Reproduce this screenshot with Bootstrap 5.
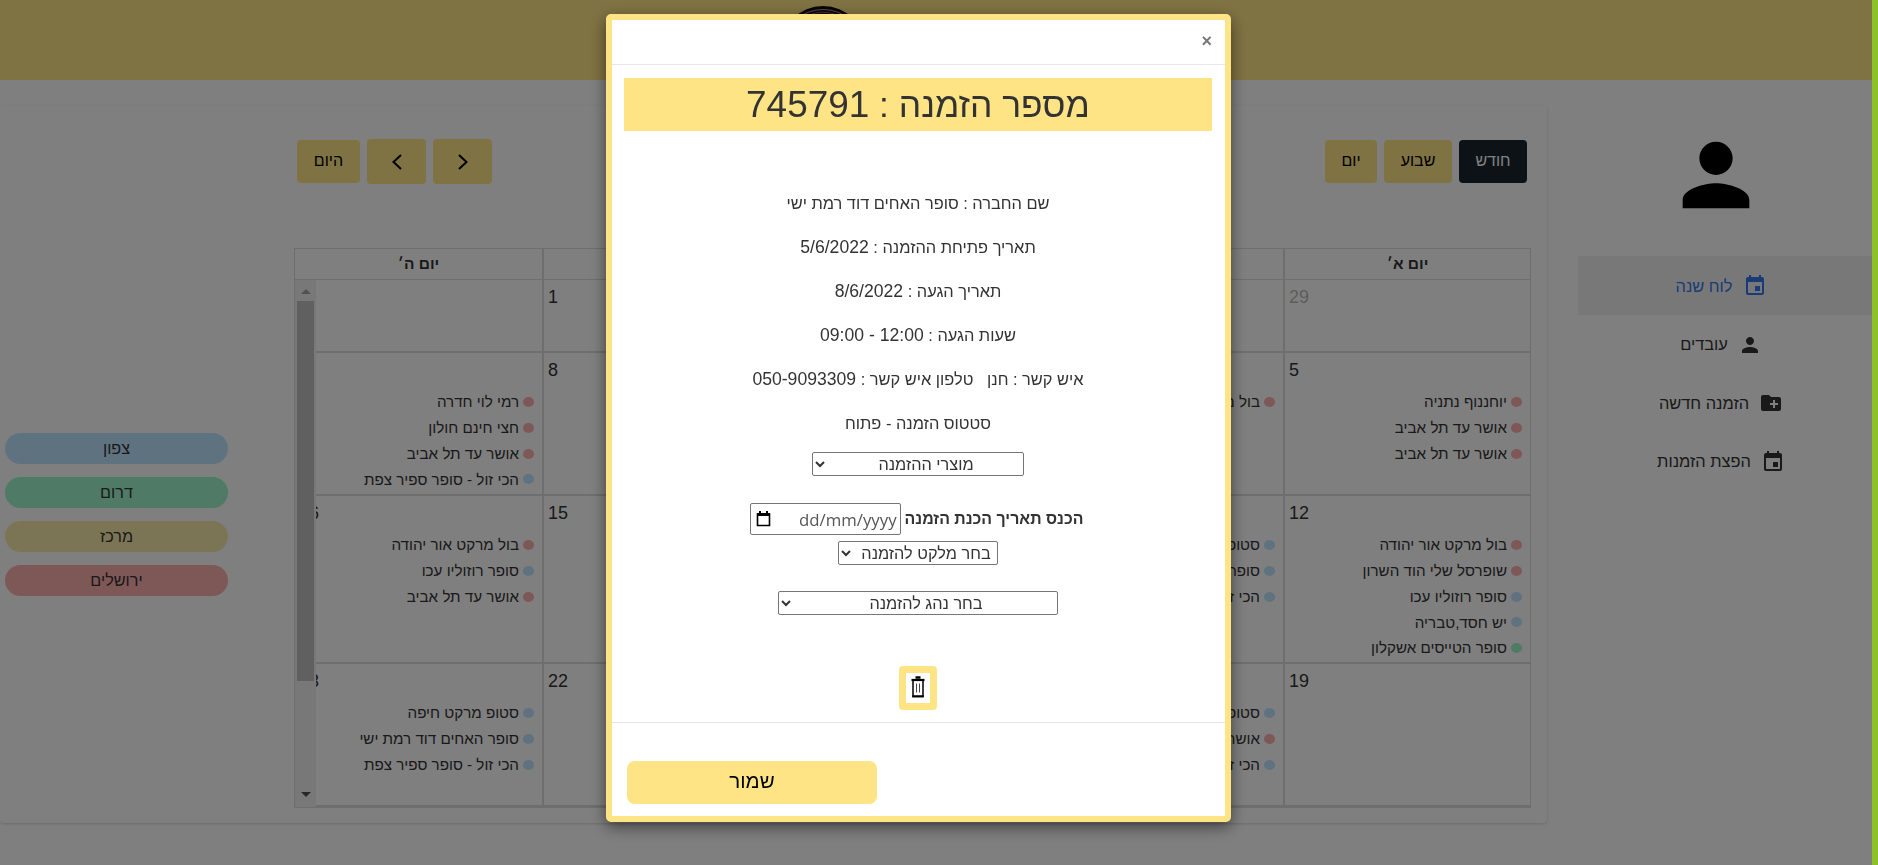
<!DOCTYPE html>
<html lang="he" dir="rtl">
<head>
<meta charset="utf-8">
<title>הזמנות</title>
<link rel="stylesheet" href="https://cdn.jsdelivr.net/npm/bootstrap@5.3.0/dist/css/bootstrap.min.css">
<style>
:root{--sun:#ffe486;--line:#ddd}
body{font-family:"Liberation Sans",Arial,sans-serif;font-size:16px;line-height:1.43;color:#333;height:865px;overflow:hidden;background:#fff}
.edge-strip{width:6px;background:#8cc227;position:relative;z-index:2000}
.page-wrap{width:1872px}
.top-bar{height:80px;background:var(--sun)}
.brand-mark{margin-left:780px;margin-top:6px}
.side-menu{width:294px;padding-top:45px}
.side-item{height:58.5px;gap:10px;padding-right:8px;padding-top:2px;font-size:16.4px;color:#333}
.side-item.active{background:#f0f0f0;color:#3477ea}
.board{width:1547px;height:718px;margin-top:25px;box-shadow:0 1px 3px rgba(0,0,0,.16);border-radius:4px}
.cal{width:1237px;margin-right:16px}
.cal-tools{height:143px;padding:34px 4px 0 3px}
.sun-btn{background:var(--sun);color:#000;border:0;border-radius:4px;height:43px;font-size:16px;padding:0}
.sun-btn.dark{background:#1a252f;color:#fff}
.cal-head,.cal-week{display:grid;grid-template-columns:repeat(5,1fr)}
.cal-grid{border:1px solid var(--line);position:relative;height:560px;overflow:hidden}
.cal-head{height:31px}
.cal-head>div{text-align:center;font-weight:700;font-size:15.5px;line-height:29px;border-left:2px solid var(--line);border-bottom:1px solid var(--line)}
.cal-week>div{border-left:2px solid var(--line);border-bottom:2px solid var(--line);padding:4px 8px 0 4px;position:relative}
.cal-head>div:last-child,.cal-week>div:last-child{border-left:0}
.day-no{font-size:18px;line-height:26px;text-align:left}
.ev{display:flex;align-items:center;gap:4px;height:25.7px;font-size:15.2px;white-space:nowrap;color:#333}
.evs{padding-top:6.5px}
.ev::before{content:"";width:11px;height:10px;border-radius:50%;background:#fdaeae}
.ev.n::before,.z-n{background:#bfe4ff}
.ev.s::before,.z-s{background:#9ff4cc}
.z-c{background:#f9ebab}
.z-j{background:#fdaeae}
.vbar{position:absolute;left:0;top:31px;width:21px;bottom:0;background:#f1f1f1}
.vbar i{position:absolute;left:2px;width:17px;top:21px;height:380px;background:#c1c1c1}
.vbar b{position:absolute;left:6px;border:5px solid transparent}
.vbar .up{top:4px;border-bottom-color:#a3a3a3}
.vbar .dn{bottom:5px;border-top-color:#505050}
.zones{width:223px;margin:328px 66px 0 0}
.zone{height:31px;border-radius:16px;line-height:31px;text-align:center;margin-bottom:13px;font-size:16.2px}
.modal-backdrop{left:0;width:1872px}
.modal.order{overflow:hidden}
.order .modal-dialog{width:625px;max-width:none;margin:14px 647px 0 0}
.order .modal-content{height:808px;border:6px solid var(--sun);border-radius:5px;box-shadow:0 5px 15px rgba(0,0,0,.5)}
.order .modal-header{height:45px;border-bottom:1px solid #e5e9ef;border-radius:0;padding:0 13px 2px 0;align-items:center}
.x-btn{font-size:18px;font-weight:700;color:#777;line-height:1;border:0;background:none;padding:0}
.order .modal-body{padding:13px 13px 0 12px;text-align:center;font-size:16.4px}
.order h1{background:var(--sun);height:53px;font-size:35.4px;line-height:53px;margin:0 0 50px;white-space:nowrap}
.order h1 span{font-size:36.9px}
.fact{height:44px;line-height:44px}
.fact span{font-size:17.6px;line-height:1}
.pick{display:block;height:24px;margin:0 auto;font-size:16.3px;border:1px solid #767676;border-radius:2px;background:#fff;color:#333;text-align:center;padding:0;line-height:20px}
.date-box{width:151px;height:32px;border:1px solid #767676;border-radius:2px;padding:0 3px 0 5px;font:16.8px "Open Sans","Noto Sans",sans-serif;color:#555}
.bin{width:38px;height:44px;border:7px solid var(--sun);border-radius:4px;background:#fff;padding:0 0 2px;margin-top:51px}
.order .modal-footer{border-top:1px solid #e5e5e5;height:100px;padding:0;margin-top:12px;display:block}
.save{width:250px;height:43px;border-radius:8px;font-size:20.5px;margin:38px 348px 0 0;padding-bottom:3px}
</style>
</head>
<body class="d-flex">
<div class="edge-strip"></div>
<div class="page-wrap flex-shrink-0">
  <header class="top-bar d-flex justify-content-end overflow-hidden">
    <svg class="brand-mark" width="86" height="86"><circle cx="43" cy="43" r="43" fill="#16090b"/><circle cx="43" cy="43" r="39.500" fill="none" stroke="#a89a94" stroke-width="1.200"/><circle cx="43" cy="43" r="36.800" fill="none" stroke="#786a66" stroke-width="1"/><circle cx="43" cy="43" r="34.500" fill="none" stroke="#8b2028" stroke-width="1.500" stroke-dasharray="2 5"/></svg>
  </header>
  <div class="d-flex justify-content-between">
    <nav class="side-menu">
      <div style="padding-right:106px;height:131px"><svg width="100" height="100" viewBox="0 0 24 24"><path d="M12 12c2.21 0 4-1.79 4-4s-1.79-4-4-4-4 1.79-4 4 1.79 4 4 4zm0 2c-2.67 0-8 1.34-8 4v2h16v-2c0-2.66-5.33-4-8-4z"/></svg></div>
      <div class="side-item active d-flex align-items-center justify-content-center"><svg width="24" height="24" viewBox="0 0 24 24" fill="currentColor"><path d="M17 12h-5v5h5v-5zM16 1v2H8V1H6v2H5c-1.11 0-2 .9-2 2v14c0 1.1.89 2 2 2h14c1.1 0 2-.9 2-2V5c0-1.1-.9-2-2-2h-1V1h-2zm3 18H5V8h14v11z"/></svg><span>לוח שנה</span></div>
      <div class="side-item d-flex align-items-center justify-content-center"><svg width="24" height="24" viewBox="0 0 24 24" fill="currentColor"><path d="M12 12c2.21 0 4-1.79 4-4s-1.79-4-4-4-4 1.79-4 4 1.79 4 4 4zm0 2c-2.67 0-8 1.34-8 4v2h16v-2c0-2.66-5.33-4-8-4z"/></svg><span>עובדים</span></div>
      <div class="side-item d-flex align-items-center justify-content-center"><svg width="24" height="24" viewBox="0 0 24 24" fill="currentColor"><path d="M20 6h-8l-2-2H4c-1.11 0-1.99.89-1.99 2L2 18c0 1.11.89 2 2 2h16c1.11 0 2-.89 2-2V8c0-1.11-.89-2-2-2zm-1 8h-3v3h-2v-3h-3v-2h3V9h2v3h3v2z"/></svg><span>הזמנה חדשה</span></div>
      <div class="side-item d-flex align-items-center justify-content-center"><svg width="24" height="24" viewBox="0 0 24 24" fill="currentColor"><path d="M17 12h-5v5h5v-5zM16 1v2H8V1H6v2H5c-1.11 0-2 .9-2 2v14c0 1.1.89 2 2 2h14c1.1 0 2-.9 2-2V5c0-1.1-.9-2-2-2h-1V1h-2zm3 18H5V8h14v11z"/></svg><span>הפצת הזמנות</span></div>
    </nav>
    <main class="board d-flex">
      <div class="cal">
        <div class="cal-tools d-flex justify-content-between">
          <div class="d-flex" style="gap:7px;padding-top:1px">
            <button class="sun-btn dark" style="width:68px">חודש</button>
            <button class="sun-btn" style="width:68px">שבוע</button>
            <button class="sun-btn" style="width:52px">יום</button>
          </div>
          <div class="d-flex align-items-center" style="gap:7px;height:45px">
            <button class="sun-btn" style="width:59px;height:45px"><svg width="12" height="18" fill="none" stroke="#000" stroke-width="2"><path d="M2 2l7.5 7L2 16"/></svg></button>
            <button class="sun-btn" style="width:59px;height:45px"><svg width="12" height="18" fill="none" stroke="#000" stroke-width="2"><path d="M10 2L2.500 9 10 16"/></svg></button>
            <button class="sun-btn" style="width:63px">היום</button>
          </div>
        </div>
        <div class="cal-grid">
          <div class="cal-head"><div>יום א׳</div><div>יום ב׳</div><div>יום ג׳</div><div>יום ד׳</div><div>יום ה׳</div></div>
          <div class="cal-week" style="height:73px"><div><div class="day-no" style="color:#bbb">29</div></div><div></div><div></div><div><div class="day-no">1</div></div><div></div></div>
          <div class="cal-week" style="height:143px">
            <div><div class="day-no">5</div><div class="evs"><div class="ev">יוחננוף נתניה</div><div class="ev">אושר עד תל אביב</div><div class="ev">אושר עד תל אביב</div></div></div>
            <div><div class="day-no">6</div><div class="evs"><div class="ev">בול מרקט</div></div></div><div></div>
            <div><div class="day-no">8</div></div>
            <div><div class="day-no">9</div><div class="evs"><div class="ev">רמי לוי חדרה</div><div class="ev">חצי חינם חולון</div><div class="ev">אושר עד תל אביב</div><div class="ev n">הכי זול - סופר ספיר צפת</div></div></div>
          </div>
          <div class="cal-week" style="height:168px">
            <div><div class="day-no">12</div><div class="evs"><div class="ev">בול מרקט אור יהודה</div><div class="ev">שופרסל שלי הוד השרון</div><div class="ev n">סופר רוזוליו עכו</div><div class="ev n">יש חסד,טבריה</div><div class="ev s">סופר הטייסים אשקלון</div></div></div>
            <div><div class="day-no">13</div><div class="evs"><div class="ev n">סטופ מרקט</div><div class="ev n">סופר האחים</div><div class="ev n">הכי זול</div></div></div><div></div>
            <div><div class="day-no">15</div></div>
            <div><div class="day-no">16</div><div class="evs"><div class="ev">בול מרקט אור יהודה</div><div class="ev n">סופר רוזוליו עכו</div><div class="ev">אושר עד תל אביב</div></div></div>
          </div>
          <div class="cal-week" style="height:143px">
            <div><div class="day-no">19</div></div>
            <div><div class="day-no">20</div><div class="evs"><div class="ev n">סטופ מרקט</div><div class="ev">אושר עד</div><div class="ev n">הכי זול</div></div></div><div></div>
            <div><div class="day-no">22</div></div>
            <div><div class="day-no">23</div><div class="evs"><div class="ev n">סטופ מרקט חיפה</div><div class="ev n">סופר האחים דוד רמת ישי</div><div class="ev n">הכי זול - סופר ספיר צפת</div></div></div>
          </div>
          <div class="vbar"><b class="up"></b><i></i><b class="dn"></b></div>
        </div>
      </div>
      <aside class="zones"><div class="zone z-n">צפון</div><div class="zone z-s">דרום</div><div class="zone z-c">מרכז</div><div class="zone z-j">ירושלים</div></aside>
    </main>
  </div>
</div>

<div class="modal-backdrop show"></div>
<div class="modal order show d-block" tabindex="-1">
  <div class="modal-dialog">
    <div class="modal-content">
      <div class="modal-header"><button class="x-btn">×</button></div>
      <div class="modal-body">
        <h1 class="fw-normal">מספר הזמנה : <span>745791</span></h1>
        <div class="fact">שם החברה : סופר האחים דוד רמת ישי</div>
        <div class="fact">תאריך פתיחת ההזמנה : <span>5/6/2022</span></div>
        <div class="fact">תאריך הגעה : <span>8/6/2022</span></div>
        <div class="fact">שעות הגעה : <span dir="ltr">09:00 - 12:00</span></div>
        <div class="fact">איש קשר : חנן &nbsp; טלפון איש קשר : <span dir="ltr">050-9093309</span></div>
        <div class="fact">סטטוס הזמנה - פתוח</div>
        <select class="pick" style="width:212px;margin-top:7px;padding-left:4px"><option>מוצרי ההזמנה</option></select>
        <div class="d-flex justify-content-center align-items-center" style="gap:4px;margin:27px 0 6px;padding-right:3px">
          <b class="text-nowrap" style="font-size:15.9px">הכנס תאריך הכנת הזמנה</b>
          <div class="date-box d-flex align-items-center justify-content-between"><span dir="ltr">dd/mm/yyyy</span><svg width="15" height="16" viewBox="0 0 15 16"><path d="M1.500 3h12v11.500h-12z" fill="none" stroke="#000" stroke-width="1.600"/><path d="M1 2h13v3H1zM3 0h2v3H3zM10 0h2v3h-2z"/></svg></div>
        </div>
        <select class="pick" style="width:160px;padding-left:4px"><option>בחר מלקט להזמנה</option></select>
        <select class="pick" style="width:280px;margin-top:26px;padding-left:4px"><option>בחר נהג להזמנה</option></select>
        <button class="bin d-inline-flex align-items-center justify-content-center"><svg width="14" height="22" viewBox="0 0 14 22" fill="none" stroke="#000"><path d="M4.500 1.500h5" stroke-width="2.500"/><path d="M.5 4h13" stroke-width="2.200"/><path d="M2 4v16.500h10V4" stroke-width="1.500"/><path d="M1.300 20.300h11.400" stroke-width="2"/><path d="M5.500 7.500v9M8.500 7.500v9" stroke="#444"/></svg></button>
      </div>
      <div class="modal-footer"><button class="sun-btn save">שמור</button></div>
    </div>
  </div>
</div>
<script src="https://cdn.jsdelivr.net/npm/bootstrap@5.3.0/dist/js/bootstrap.bundle.min.js"></script>
</body>
</html>
